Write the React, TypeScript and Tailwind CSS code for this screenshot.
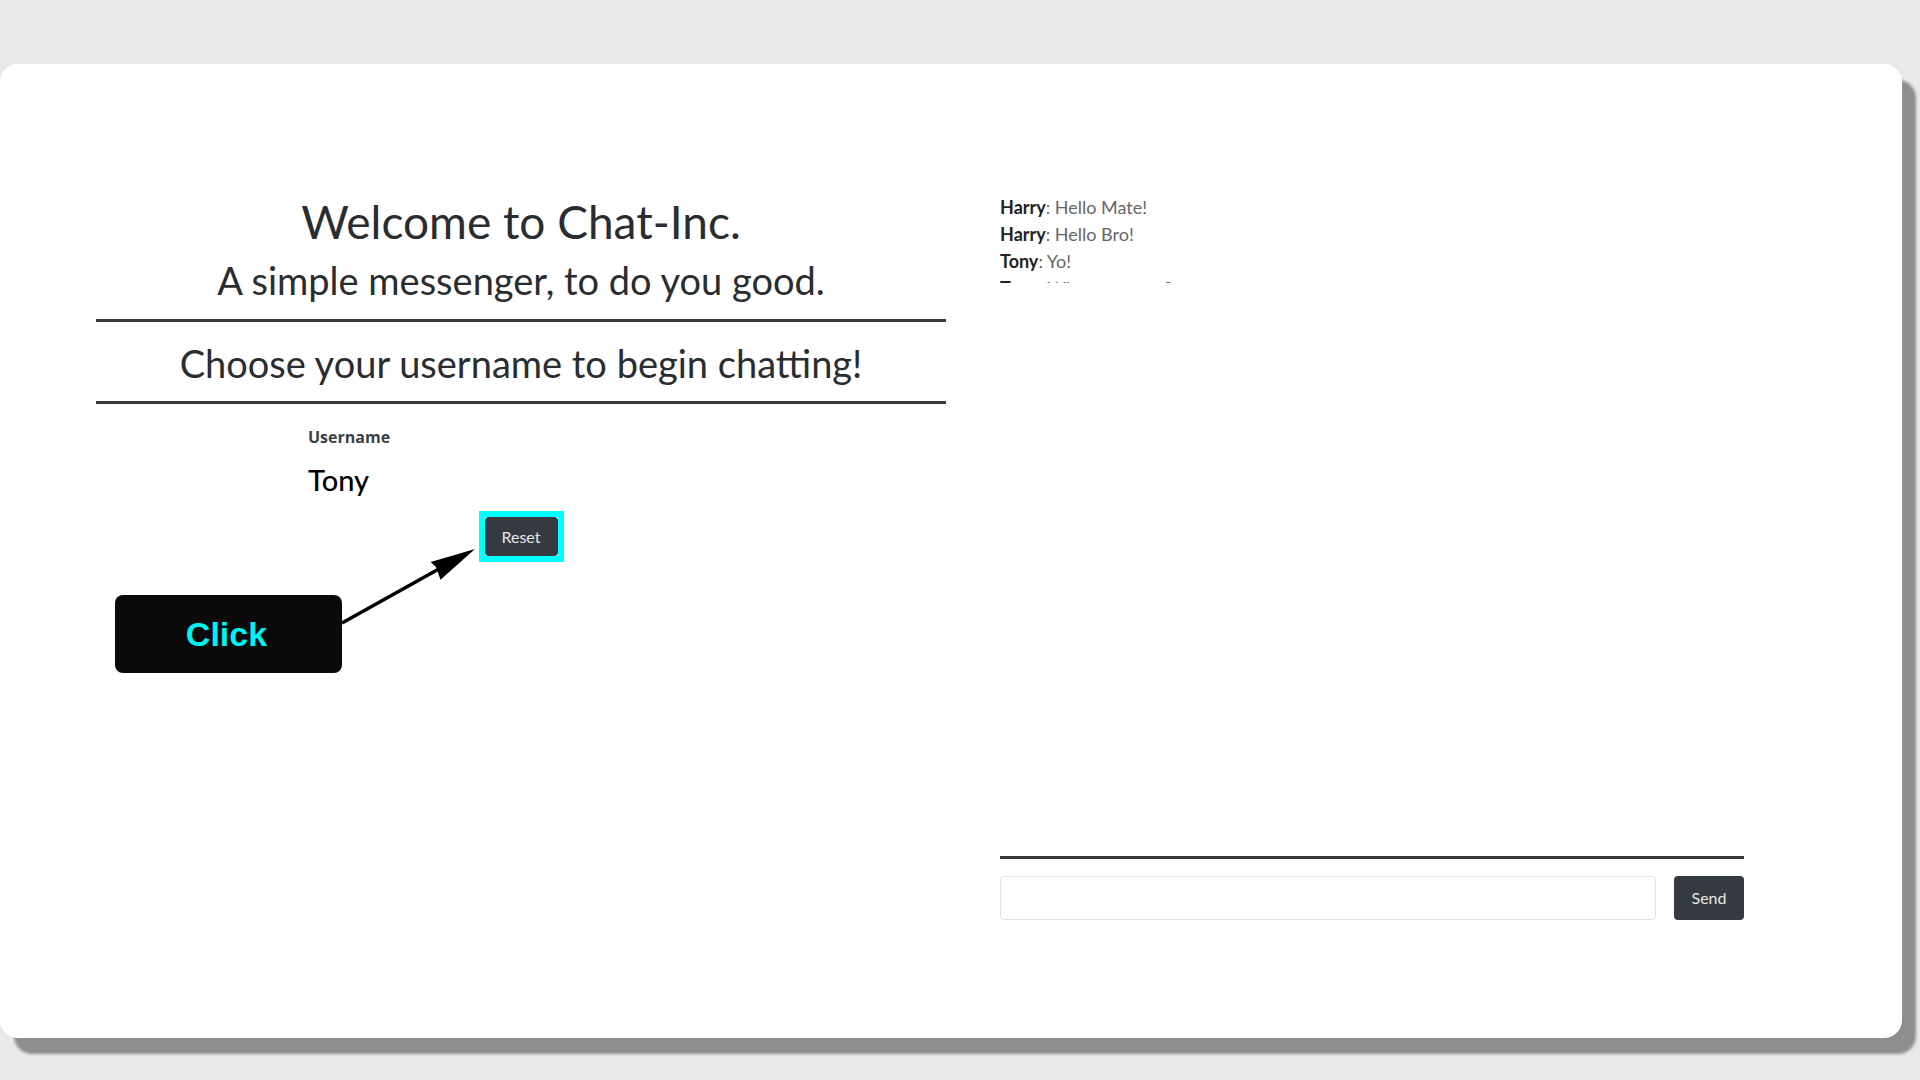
import React from "react";

const messages = [
  { name: "Harry", text: "Hello Mate!" },
  { name: "Harry", text: "Hello Bro!" },
  { name: "Tony", text: "Yo!" },
  { name: "Tony", text: "Whats up guys?" },
];

const App = () => {
  return (
    <div className="min-h-screen w-full bg-[#e9e9e9] pt-[64px] font-['Lato','Noto_Sans',sans-serif] text-[#212529]">
      <div className="relative flex h-[974px] w-[1902px] rounded-[18px] bg-white shadow-[14px_16px_3px_#8e8e8e]">
        {/* Left: username form */}
        <div className="ml-[96px] flex w-[850px] flex-col pt-[130px]">
          <h1 className="text-center text-[46px] leading-[1.2] text-[#2a2d30]">Welcome to Chat-Inc.</h1>
          <h3 className="mt-[9px] text-center text-[38px] leading-[1.2] text-[#2a2d30]">
            A simple messenger, to do you good.
          </h3>
          <div className="mt-[15px] h-[3px] bg-[#353a3f]" />
          <h2 className="mt-[19px] text-center text-[38px] leading-[1.2] text-[#2a2d30]">
            Choose your username to begin chatting!
          </h2>
          <div className="mt-[15px] h-[3px] bg-[#353a3f]" />

          <div className="mx-auto mt-[24px] flex w-[426px] flex-col">
            <label className="font-['Open_Sans',sans-serif] text-[16px] font-bold leading-[1.2] text-[#3a3f48]">
              Username
            </label>
            <div className="mt-[15px] text-[29px] font-medium leading-[1.2] text-black">Tony</div>
            <div className="mt-[14px] flex justify-center">
              <div className="border-[6px] border-[#00ffff]">
                <button className="h-[39px] w-[73px] rounded-[4px] bg-[#343a40] text-[16px] text-[#e8e8e8]">
                  Reset
                </button>
              </div>
            </div>
          </div>
        </div>

        {/* Right: chat */}
        <div className="ml-[54px] flex w-[744px] flex-col pt-[130px]">
          <div className="h-[89px] overflow-hidden text-[18px] leading-[27px]">
            {messages.map((m, i) => (
              <div key={i}>
                <span className="font-bold text-[#222]">{m.name}</span>
                <span className="text-[#666]">: {m.text}</span>
              </div>
            ))}
          </div>
          <div className="mt-[573px] h-[3px] bg-[#353a3f]" />
          <div className="mt-[17px] flex items-center gap-[18px]">
            <input className="h-[44px] flex-1 rounded-[4px] border border-[#dfe2e6] px-3 outline-none" />
            <button className="h-[44px] w-[70px] rounded-[4px] bg-[#343a40] text-[16px] text-[#e8e8e8]">Send</button>
          </div>
        </div>

        {/* Annotation */}
        <div className="absolute left-[115px] top-[531px] flex h-[78px] w-[227px] items-center justify-center rounded-[8px] bg-[#0a0a0a]">
          <span className="mr-[4px] font-['Liberation_Sans',Arial,sans-serif] text-[34px] font-bold text-[#00f2f2]">
            Click
          </span>
        </div>
        <svg className="pointer-events-none absolute left-0 top-0" width="1902" height="974">
          <line x1="342" y1="559" x2="446" y2="501" stroke="#000" strokeWidth="3.5" />
          <polygon points="475,485 430.7,498 436,503 440.5,515.7" fill="#000" />
        </svg>
      </div>
    </div>
  );
};

export default App;
